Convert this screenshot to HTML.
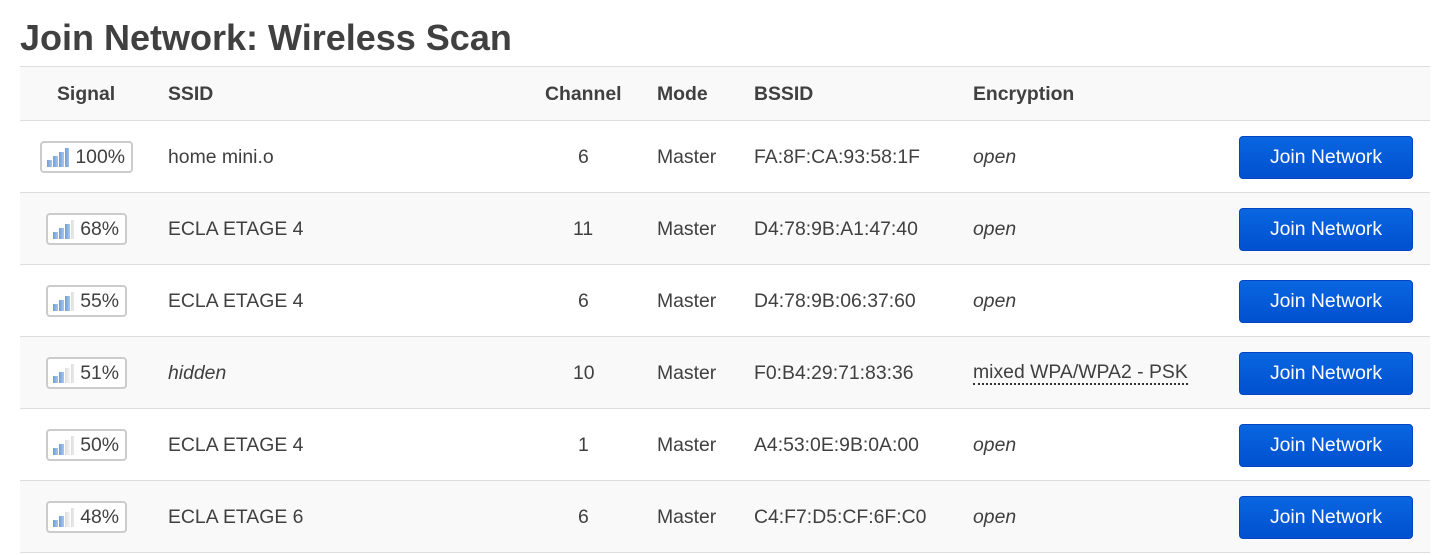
<!DOCTYPE html>
<html><head><style>
body{margin:0;background:#fff;font-family:"Liberation Sans",Arial,sans-serif;color:#404040;width:1451px;height:555px;overflow:hidden;position:relative}
h1{position:absolute;left:20px;top:16px;margin:0;font-size:36px;font-weight:bold;color:#404040;line-height:44px}
.row{position:absolute;left:20px;width:1410px;border-top:1px solid #ddd;font-size:19.4px}
.row div{position:absolute;white-space:nowrap}
.hd{top:66px;height:54px;background:#f9f9f9;font-weight:bold}
.hd div{top:16px}
.r{height:71px}
.r .t{top:25px}
.alt{background:#f9f9f9}
.badge{position:absolute;top:20px;height:32px;border:2px solid #ccc;border-radius:4px;background:#fff;box-sizing:border-box;display:flex;align-items:center;padding:0 6px 0 5px}
.badge svg{margin-right:6px}
.btn{position:absolute;left:1219px;top:15px;width:174px;height:43px;background:linear-gradient(#0a66e0,#0050d0);border:1px solid #0046c0;border-radius:4px;box-sizing:border-box;color:#fff;text-align:center;line-height:40px;font-size:19.4px}
.enc{font-style:italic}
</style></head><body>
<h1>Join Network: Wireless Scan</h1>
<div class="row hd"><div style="left:37px">Signal</div><div style="left:148px">SSID</div><div style="left:525px">Channel</div><div style="left:637px">Mode</div><div style="left:734px">BSSID</div><div style="left:953px">Encryption</div></div>

<svg width="0" height="0" style="position:absolute"><defs>
<linearGradient id="b" x1="0" x2="1"><stop offset="0" stop-color="#6f9fd8"/><stop offset="1" stop-color="#a8c6ec"/></linearGradient>
<linearGradient id="g" x1="0" x2="1"><stop offset="0" stop-color="#ddd"/><stop offset="1" stop-color="#f4f4f4"/></linearGradient>
</defs></svg>

<div class="row r" style="top:120px"><div class="badge" style="left:20px;width:93px"><svg width="24" height="20"><rect x="0" y="13" width="5" height="7" fill="url(#b)"/><rect x="6" y="9" width="5" height="11" fill="url(#b)"/><rect x="12" y="5" width="5" height="15" fill="url(#b)"/><rect x="18" y="1" width="5" height="19" fill="url(#b)"/></svg>100%</div><div class="t" style="left:148px">home mini.o</div><div class="t" style="left:558px">6</div><div class="t" style="left:637px">Master</div><div class="t" style="left:734px">FA:8F:CA:93:58:1F</div><div class="t enc" style="left:953px">open</div><div class="btn">Join Network</div></div>

<div class="row r alt" style="top:192px"><div class="badge" style="left:26px;width:81px"><svg width="24" height="20"><rect x="0" y="13" width="5" height="7" fill="url(#b)"/><rect x="6" y="9" width="5" height="11" fill="url(#b)"/><rect x="12" y="5" width="5" height="15" fill="url(#b)"/><rect x="18" y="1" width="5" height="19" fill="url(#g)"/></svg>68%</div><div class="t" style="left:148px">ECLA ETAGE 4</div><div class="t" style="left:553px">11</div><div class="t" style="left:637px">Master</div><div class="t" style="left:734px">D4:78:9B:A1:47:40</div><div class="t enc" style="left:953px">open</div><div class="btn">Join Network</div></div>

<div class="row r" style="top:264px"><div class="badge" style="left:26px;width:81px"><svg width="24" height="20"><rect x="0" y="13" width="5" height="7" fill="url(#b)"/><rect x="6" y="9" width="5" height="11" fill="url(#b)"/><rect x="12" y="5" width="5" height="15" fill="url(#b)"/><rect x="18" y="1" width="5" height="19" fill="url(#g)"/></svg>55%</div><div class="t" style="left:148px">ECLA ETAGE 4</div><div class="t" style="left:558px">6</div><div class="t" style="left:637px">Master</div><div class="t" style="left:734px">D4:78:9B:06:37:60</div><div class="t enc" style="left:953px">open</div><div class="btn">Join Network</div></div>

<div class="row r alt" style="top:336px"><div class="badge" style="left:26px;width:81px"><svg width="24" height="20"><rect x="0" y="13" width="5" height="7" fill="url(#b)"/><rect x="6" y="9" width="5" height="11" fill="url(#b)"/><rect x="12" y="5" width="5" height="15" fill="url(#g)"/><rect x="18" y="1" width="5" height="19" fill="url(#g)"/></svg>51%</div><div class="t" style="left:148px;font-style:italic">hidden</div><div class="t" style="left:553px">10</div><div class="t" style="left:637px">Master</div><div class="t" style="left:734px">F0:B4:29:71:83:36</div><div class="t" style="left:953px;border-bottom:2px dotted #333;line-height:21px">mixed WPA/WPA2 - PSK</div><div class="btn">Join Network</div></div>

<div class="row r" style="top:408px"><div class="badge" style="left:26px;width:81px"><svg width="24" height="20"><rect x="0" y="13" width="5" height="7" fill="url(#b)"/><rect x="6" y="9" width="5" height="11" fill="url(#b)"/><rect x="12" y="5" width="5" height="15" fill="url(#g)"/><rect x="18" y="1" width="5" height="19" fill="url(#g)"/></svg>50%</div><div class="t" style="left:148px">ECLA ETAGE 4</div><div class="t" style="left:558px">1</div><div class="t" style="left:637px">Master</div><div class="t" style="left:734px">A4:53:0E:9B:0A:00</div><div class="t enc" style="left:953px">open</div><div class="btn">Join Network</div></div>

<div class="row r alt" style="top:480px;border-bottom:1px solid #ddd"><div class="badge" style="left:26px;width:81px"><svg width="24" height="20"><rect x="0" y="13" width="5" height="7" fill="url(#b)"/><rect x="6" y="9" width="5" height="11" fill="url(#b)"/><rect x="12" y="5" width="5" height="15" fill="url(#g)"/><rect x="18" y="1" width="5" height="19" fill="url(#g)"/></svg>48%</div><div class="t" style="left:148px">ECLA ETAGE 6</div><div class="t" style="left:558px">6</div><div class="t" style="left:637px">Master</div><div class="t" style="left:734px">C4:F7:D5:CF:6F:C0</div><div class="t enc" style="left:953px">open</div><div class="btn">Join Network</div></div>
</body></html>
